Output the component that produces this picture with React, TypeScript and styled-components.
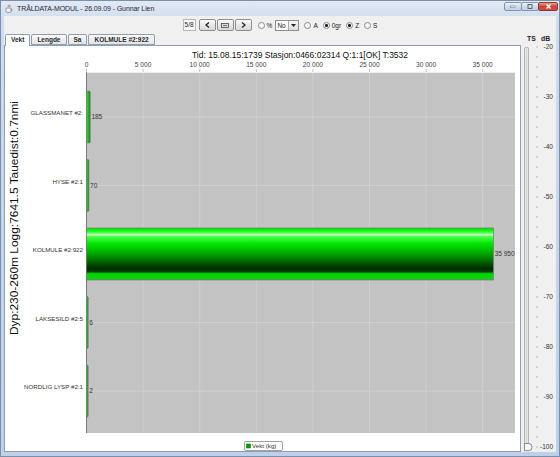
import styled, { createGlobalStyle } from 'styled-components';

const GlobalStyle = createGlobalStyle`
  html, body { margin: 0; padding: 0; background: #ffffff; }
  body { width: 560px; height: 457px; overflow: hidden; font-family: "Liberation Sans", Arial, sans-serif; }
`;

// data
const rows = [
  { label: 'GLASSMANET #2:', value: 185, text: '185' },
  { label: 'HYSE #2:1', value: 70, text: '70' },
  { label: 'KOLMULE #2:922', value: 35950, text: '35 950' },
  { label: 'LAKSESILD #2:5', value: 6, text: '6' },
  { label: 'NORDLIG LYSP #2:1', value: 2, text: '2' },
];
const ticks = [0, 5000, 10000, 15000, 20000, 25000, 30000, 35000];
const X0 = 86.5;
const PX = 56.6 / 5000;
const xOf = (v: number) => X0 + v * PX;
const PLOT = { left: 86, top: 72, right: 515, bottom: 433 };
const rowY = (i: number) => 117 + i * 68.5;
const BAR_H = 52;

/* ---------- window frame ---------- */
const Window = styled.div`
  width: 560px;
  height: 457px;
  display: flex;
  flex-direction: column;
  box-sizing: border-box;
  background: linear-gradient(#e2e9f2, #cfdcee 20px, #bcd0ea);
  border: 1px solid #7c8fa8;
`;

const TitleBar = styled.div`
  height: 15px;
  display: flex;
  align-items: center;
  padding: 0 1px 0 4px;
  gap: 4px;
`;

const TitleText = styled.span`
  flex: 1;
  font-size: 7px;
  color: #1e2a3a;
  letter-spacing: -0.1px;
`;

const Controls = styled.div`
  display: flex;
  align-self: flex-start;
  margin-top: 1px;
`;

const CtrlButton = styled.div<{ $close?: boolean; $w: number }>`
  width: ${({ $w }) => $w}px;
  height: 9px;
  box-sizing: border-box;
  border: 1px solid ${({ $close }) => ($close ? '#8a3a30' : '#8094b0')};
  border-radius: 2px;
  margin-left: -1px;
  display: flex;
  align-items: center;
  justify-content: center;
  background: ${({ $close }) =>
    $close ? 'linear-gradient(#e8a090, #c8453a 50%, #d05040)' : 'linear-gradient(#eef3fa, #cfdbeb 50%, #c2d2e8)'};
`;

const Client = styled.div`
  flex: 1;
  margin: 0 3px 4px 3px;
  background: #f0f0f0;
  display: flex;
  flex-direction: column;
  min-height: 0;
`;

/* ---------- toolbar ---------- */
const Toolbar = styled.div`
  height: 16px;
  display: flex;
  align-items: center;
  justify-content: center;
  padding-top: 1px;
  font-size: 6.5px;
  color: #222;
`;

const Counter = styled.span`
  border: 1px solid #b8b8b8;
  background: #fafafa;
  padding: 1px 1px;
  margin-right: 3px;
  line-height: 8px;
`;

const NavButton = styled.button`
  width: 17px;
  height: 12px;
  padding: 0;
  margin: 0 1px 0 0;
  box-sizing: border-box;
  border: 1px solid #8d8d8d;
  border-radius: 2px;
  background: linear-gradient(#fbfbfb, #e8e8e8 50%, #d9d9d9);
  display: flex;
  align-items: center;
  justify-content: center;
`;

const Radio = styled.label<{ $checked?: boolean }>`
  display: flex;
  align-items: center;
  gap: 2px;
  margin-left: 5px;
  &::before {
    content: '';
    width: 5px;
    height: 5px;
    border-radius: 50%;
    border: 1px solid #8a8a8a;
    background: ${({ $checked }) =>
      $checked ? 'radial-gradient(circle, #1a1a1a 0 1.3px, #f4f4f4 1.6px)' : '#f8f8f8'};
  }
`;

const Combo = styled.div`
  display: flex;
  margin-left: 3px;
  height: 11px;
  box-sizing: border-box;
  border: 1px solid #8d8d8d;
  background: #fff;
`;

const ComboText = styled.span`
  width: 11px;
  padding-left: 1px;
  line-height: 9px;
`;

const ComboArrow = styled.span`
  width: 9px;
  border-left: 1px solid #a8a8a8;
  background: linear-gradient(#f7f7f7, #dedede);
  display: flex;
  align-items: center;
  justify-content: center;
`;

/* ---------- body ---------- */
const Body = styled.div`
  flex: 1;
  display: flex;
  min-height: 0;
`;

const Main = styled.div`
  width: 517px;
  display: flex;
  flex-direction: column;
`;

const TabRow = styled.div`
  height: 13px;
  display: flex;
  align-items: flex-end;
  padding-left: 1px;
`;

const Tab = styled.div<{ $active?: boolean }>`
  height: ${({ $active }) => ($active ? 12 : 11)}px;
  box-sizing: border-box;
  padding: 0 5px;
  margin-right: 1px;
  margin-bottom: ${({ $active }) => ($active ? -1 : 0)}px;
  border: 1px solid #8e9fb3;
  border-bottom: ${({ $active }) => ($active ? 'none' : '1px solid #8e9fb3')};
  border-radius: 2px 2px 0 0;
  background: ${({ $active }) => ($active ? '#ffffff' : 'linear-gradient(#fafafa, #e4e4e4)')};
  font-size: 6.5px;
  font-weight: bold;
  color: #2a2a2a;
  line-height: 10px;
  position: relative;
  z-index: ${({ $active }) => ($active ? 1 : 0)};
`;

const ChartPanel = styled.div`
  flex: 1;
  background: #ffffff;
  border: 1px solid #8e9fb3;
  display: flex;
`;

const ScalePanel = styled.div`
  flex: 1;
  display: flex;
`;

function Chart() {
  return (
    <svg width={515} height={405} viewBox="5 46 515 405" fontFamily="Liberation Sans, Arial, sans-serif">
      <defs>
        <linearGradient id="bar" x1="0" y1="0" x2="0" y2="1">
          <stop offset="0" stopColor="#10d810" />
          <stop offset="0.05" stopColor="#00ff00" />
          <stop offset="0.1" stopColor="#60ff60" />
          <stop offset="0.13" stopColor="#e0ffe0" />
          <stop offset="0.16" stopColor="#50ff50" />
          <stop offset="0.3" stopColor="#00e800" />
          <stop offset="0.55" stopColor="#009000" />
          <stop offset="0.78" stopColor="#002a00" />
          <stop offset="0.84" stopColor="#004000" />
          <stop offset="0.88" stopColor="#00d800" />
          <stop offset="1" stopColor="#18c818" />
        </linearGradient>
        <linearGradient id="thin" x1="0" y1="0" x2="1" y2="0">
          <stop offset="0" stopColor="#40e040" />
          <stop offset="1" stopColor="#108010" />
        </linearGradient>
      </defs>
      <text x={300} y={58} fontSize={9.5} textAnchor="middle" textLength={216} lengthAdjust="spacingAndGlyphs" fill="#111">
        Tid: 15.08.15:1739  Stasjon:0466:02314  Q:1:1[OK]  T:3532
      </text>
      {ticks.map((t) => (
        <g key={t}>
          <text x={xOf(t)} y={66.5} fontSize={6.6} textAnchor="middle" fill="#444">
            {t === 0 ? '0' : `${t / 1000} 000`}
          </text>
          <line x1={xOf(t)} x2={xOf(t)} y1={69} y2={72} stroke="#999" strokeWidth={0.6} />
        </g>
      ))}
      <rect x={PLOT.left} y={PLOT.top} width={PLOT.right - PLOT.left} height={PLOT.bottom - PLOT.top} fill="#c3c3c3" />
      {ticks.slice(1).map((t) => (
        <line key={t} x1={xOf(t)} x2={xOf(t)} y1={PLOT.top} y2={PLOT.bottom} stroke="#d2d2d2" strokeWidth={0.8} />
      ))}
      {rows.map((r, i) => (
        <line key={r.label} x1={PLOT.left} x2={PLOT.right} y1={rowY(i)} y2={rowY(i)} stroke="#d2d2d2" strokeWidth={0.8} />
      ))}
      <line x1={PLOT.left} x2={PLOT.right} y1={PLOT.top + 0.5} y2={PLOT.top + 0.5} stroke="#eeeeee" />
      <line x1={PLOT.left + 0.5} x2={PLOT.left + 0.5} y1={PLOT.top} y2={PLOT.bottom} stroke="#7a7a7a" />
      {rows.map((r, i) => {
        const thin = r.value * PX < 5;
        const w = thin ? r.value * PX + 1.6 : r.value * PX;
        const cy = rowY(i);
        return (
          <g key={r.label}>
            <rect
              x={X0}
              y={cy - BAR_H / 2}
              width={w}
              height={BAR_H}
              fill={thin ? 'url(#thin)' : 'url(#bar)'}
              stroke="#7a7a7a"
              strokeWidth={0.7}
              rx={thin ? 1.2 : 0}
            />
            <text x={X0 + w + 1.2} y={cy + 2.2} fontSize={6.5} fill="#333">
              {r.text}
            </text>
            <text x={83} y={cy - 2} fontSize={6.2} textAnchor="end" fill="#333">
              {r.label}
            </text>
          </g>
        );
      })}
      <text
        x={15}
        y={218}
        transform="rotate(-90 15 218)"
        fontSize={10.5}
        textAnchor="middle"
        dominantBaseline="middle"
        textLength={234}
        lengthAdjust="spacingAndGlyphs"
        fill="#111"
      >
        Dyp:230-260m Logg:7641.5 Tauedist:0.7nmi
      </text>
      <rect x={244.5} y={441.5} width={38} height={9} rx={1.5} fill="#fff" stroke="#8a8a8a" strokeWidth={0.8} />
      <rect x={246.5} y={444} width={4} height={4} fill="#00a000" stroke="#006000" strokeWidth={0.5} />
      <text x={252} y={448.3} fontSize={6.2} fill="#333">
        Vekt (kg)
      </text>
    </svg>
  );
}

function Scale() {
  const majors = [-20, -30, -40, -50, -60, -70, -80, -90, -100];
  const minors = Array.from({ length: 41 }, (_, i) => -20 - i * 2);
  const yOf = (db: number) => 47 + (-20 - db) * 5;
  return (
    <svg width={35} height={419} viewBox="521 33 35 419" fontFamily="Liberation Sans, Arial, sans-serif">
      <rect x={521} y={33} width={35} height={419} fill="#f0f0f0" />
      <text x={527} y={40.5} fontSize={6.8} fontWeight="bold" fill="#222">TS</text>
      <text x={541} y={40.5} fontSize={6.8} fontWeight="bold" fill="#222">dB</text>
      <rect x={524.5} y={47.5} width={4} height={399} fill="#e6e6e6" stroke="#a6a6a6" strokeWidth={0.8} rx={1} />
      <line x1={526.5} x2={526.5} y1={48} y2={446} stroke="#c8ccd4" strokeWidth={0.6} />
      {minors.map((d) => (
        <line key={d} x1={536} x2={538} y1={yOf(d)} y2={yOf(d)} stroke="#a0a0a0" strokeWidth={0.7} />
      ))}
      {majors.map((d) => (
        <text key={d} x={553} y={yOf(d) + 2.3} fontSize={6.5} textAnchor="end" fill="#333">
          {d}
        </text>
      ))}
      <path d="M524.5 443.5 h4 a3.6 3.6 0 0 1 0 7.2 h-4 z" fill="#f6f6f6" stroke="#6e6e6e" strokeWidth={0.8} />
    </svg>
  );
}

export default function App() {
  return (
    <>
      <GlobalStyle />
      <Window>
        <TitleBar>
          <svg width={8} height={9} viewBox="0 0 8 9">
            <path d="M1 4 h5 v3 a1.5 1.5 0 0 1 -1.5 1.5 h-2 A1.5 1.5 0 0 1 1 7 z" fill="#f0f0f0" stroke="#5a6f8a" strokeWidth={0.6} />
            <path d="M6 5 a1 1 0 0 1 0 2" fill="none" stroke="#5a6f8a" strokeWidth={0.6} />
            <path d="M3 1 q1 1 0 2 M4.5 0.5 q1 1 0 2.5" fill="none" stroke="#d04020" strokeWidth={0.7} />
          </svg>
          <TitleText>TRÅLDATA-MODUL - 26.09.09 - Gunnar Lien</TitleText>
          <Controls>
            <CtrlButton $w={18}>
              <svg width={6} height={3}><rect x={0.5} y={1} width={5} height={1.5} fill="#fff" stroke="#3a4a60" strokeWidth={0.4} /></svg>
            </CtrlButton>
            <CtrlButton $w={18}>
              <svg width={6} height={5}><rect x={1} y={0.5} width={4} height={4} fill="none" stroke="#3a4a60" strokeWidth={0.8} /></svg>
            </CtrlButton>
            <CtrlButton $w={20} $close>
              <svg width={7} height={5}><path d="M1.5 0.5 L5.5 4.5 M5.5 0.5 L1.5 4.5" stroke="#fff" strokeWidth={1.3} /></svg>
            </CtrlButton>
          </Controls>
        </TitleBar>
        <Client>
          <Toolbar>
            <Counter>5/8</Counter>
            <NavButton>
              <svg width={5} height={6}><path d="M4 0.5 L1 3 L4 5.5" fill="none" stroke="#222" strokeWidth={1.3} /></svg>
            </NavButton>
            <NavButton>
              <svg width={8} height={5}><rect x={0.5} y={0.5} width={7} height={4} fill="#ddd" stroke="#333" strokeWidth={0.7} /><path d="M2 2.5 h4" stroke="#333" strokeWidth={0.6} /></svg>
            </NavButton>
            <NavButton>
              <svg width={5} height={6}><path d="M1 0.5 L4 3 L1 5.5" fill="none" stroke="#222" strokeWidth={1.3} /></svg>
            </NavButton>
            <Radio>%</Radio>
            <Combo>
              <ComboText>No</ComboText>
              <ComboArrow>
                <svg width={5} height={3}><path d="M0 0 h5 L2.5 3 z" fill="#222" /></svg>
              </ComboArrow>
            </Combo>
            <Radio>A</Radio>
            <Radio $checked>0gr</Radio>
            <Radio $checked>Z</Radio>
            <Radio>S</Radio>
          </Toolbar>
          <Body>
            <Main>
              <TabRow>
                <Tab $active>Vekt</Tab>
                <Tab>Lengde</Tab>
                <Tab>Sa</Tab>
                <Tab>KOLMULE #2:922</Tab>
              </TabRow>
              <ChartPanel>
                <Chart />
              </ChartPanel>
            </Main>
            <ScalePanel>
              <Scale />
            </ScalePanel>
          </Body>
        </Client>
      </Window>
    </>
  );
}
